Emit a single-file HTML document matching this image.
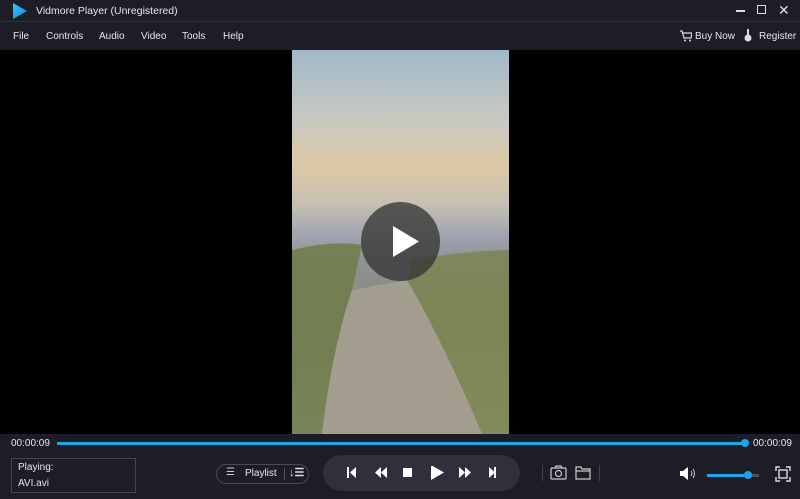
<!DOCTYPE html>
<html><head><style>
*{margin:0;padding:0;box-sizing:border-box}
body{width:800px;height:499px;background:#1d1d28;font-family:"Liberation Sans",sans-serif;color:#e6e6ea;font-size:10px;position:relative;overflow:hidden}
.abs{position:absolute}
</style></head><body>
<div class="abs" style="left:0;top:0;width:800px;height:22px;background:#1d1d28;border-bottom:1px solid #2e2e3a"></div>
<svg class="abs" style="left:12px;top:2px" width="16" height="18"><defs><linearGradient id="g" x1="0" y1="0" x2="1" y2="1"><stop offset="0" stop-color="#2ad0f5"/><stop offset="1" stop-color="#1a7fe0"/></linearGradient></defs><path d="M1 1 L15 9 L1 17 Z" fill="url(#g)"/></svg>
<div class="abs" style="left:36px;top:5px;font-size:10.5px">Vidmore Player (Unregistered)</div>
<div class="abs" style="left:736px;top:10px;width:9px;height:1.5px;background:#ddd"></div>
<div class="abs" style="left:757px;top:5px;width:9px;height:9px;border:1.5px solid #ddd"></div>
<div class="abs" style="left:778px;top:2px;font-size:14px;color:#ddd">✕</div>
<div class="abs" style="left:13px;top:31px">File</div>
<div class="abs" style="left:46px;top:31px">Controls</div>
<div class="abs" style="left:99px;top:31px">Audio</div>
<div class="abs" style="left:141px;top:31px">Video</div>
<div class="abs" style="left:182px;top:31px">Tools</div>
<div class="abs" style="left:223px;top:31px">Help</div>
<svg class="abs" style="left:680px;top:30px" width="12" height="12"><path d="M0 1h2l2 7h7l1-5H3" fill="none" stroke="#ddd" stroke-width="1.2"/><circle cx="5" cy="10.5" r="1" fill="#ddd"/><circle cx="10" cy="10.5" r="1" fill="#ddd"/></svg>
<div class="abs" style="left:695px;top:31px">Buy Now</div>
<svg class="abs" style="left:744px;top:29px" width="8" height="13"><rect x="3" y="0" width="2" height="6" fill="#ddd"/><circle cx="4" cy="9" r="3.5" fill="#ddd"/></svg>
<div class="abs" style="left:759px;top:31px">Register</div>
<div class="abs" style="left:0;top:50px;width:800px;height:384px;background:#000"></div>
<div class="abs" style="left:292px;top:50px;width:217px;height:384px;overflow:hidden;background:linear-gradient(180deg,#9fb8c8 0%,#c8c9c2 18%,#dcc9a6 30%,#c8c0b2 40%,#9fa6b0 48%,#8e9498 54%,#8a8f86 60%,#8d8c7e 72%,#9a968c 85%,#b1aea3 100%)">
<svg width="217" height="384" style="position:absolute;left:0;top:0"><path d="M0 200 Q40 190 70 195 L60 240 Q40 300 30 384 L0 384Z" fill="#6f7c4a" opacity=".85"/><path d="M217 200 Q180 200 120 210 L115 230 Q150 290 190 384 L217 384Z" fill="#7a8550" opacity=".85"/><path d="M60 240 Q40 300 30 384 L190 384 Q150 290 115 230Z" fill="#a39d90"/></svg>
</div>
<div class="abs" style="left:361px;top:202px;width:79px;height:79px;border-radius:50%;background:rgba(50,50,50,.75)"></div>
<svg class="abs" style="left:392px;top:225px" width="28" height="33"><path d="M1 1L27 16.5L1 32Z" fill="#fff"/></svg>
<div class="abs" style="left:11px;top:438px;font-size:10px">00:00:09</div>
<div class="abs" style="left:57px;top:442px;width:688px;height:3px;background:#1ea5e6"></div>
<div class="abs" style="left:741px;top:439px;width:8px;height:8px;border-radius:50%;background:#1ea5e6"></div>
<div class="abs" style="left:753px;top:438px;font-size:10px">00:00:09</div>
<div class="abs" style="left:11px;top:458px;width:125px;height:35px;border:1px solid #45454f"></div>
<div class="abs" style="left:18px;top:462px;font-size:10px">Playing:</div>
<div class="abs" style="left:18px;top:478px;font-size:10px">AVI.avi</div>
<div class="abs" style="left:216px;top:464px;width:93px;height:20px;border:1px solid #4a4a55;border-radius:10px"></div>
<div class="abs" style="left:226px;top:467px;font-size:10px;color:#ccc">☰</div>
<div class="abs" style="left:245px;top:468px;font-size:10px">Playlist</div>
<div class="abs" style="left:284px;top:468px;width:1px;height:12px;background:#555"></div>
<div class="abs" style="left:289px;top:466px;font-size:11px;font-weight:bold;color:#ddd">↓☰</div>
<div class="abs" style="left:323px;top:455px;width:197px;height:36px;border-radius:18px;background:#30303c"></div>
<svg class="abs" style="left:346px;top:466px" width="150" height="14" fill="#fff"><rect x="1" y="1" width="2" height="11"/><path d="M10 1L4 6.5L10 12Z"/><path d="M35 1L29 6.5L35 12ZM41 1L35 6.5L41 12Z"/><rect x="57" y="2" width="9" height="9"/><path d="M85 -1L98 6.5L85 14Z"/><path d="M113 1L119 6.5L113 12ZM119 1L125 6.5L119 12Z"/><path d="M143 1L149 6.5L143 12Z"/><rect x="148" y="1" width="2" height="11"/></svg>
<div class="abs" style="left:542px;top:465px;width:1px;height:16px;background:#444"></div>
<svg class="abs" style="left:550px;top:465px" width="42" height="15" fill="none" stroke="#ccc" stroke-width="1.2"><rect x="1" y="3" width="15" height="11" rx="1"/><circle cx="8.5" cy="8.5" r="3"/><path d="M5 3l1-2h5l1 2"/><path d="M26 2h5l1 2h8v10H26Z"/><path d="M26 6h14"/></svg>
<div class="abs" style="left:599px;top:465px;width:1px;height:16px;background:#444"></div>
<svg class="abs" style="left:679px;top:466px" width="18" height="15"><path d="M1 5h3l5-4v13l-5-4H1Z" fill="#fff"/><path d="M12 5q2 2.5 0 5M14 3q3 4.5 0 9" stroke="#ccc" fill="none"/></svg>
<div class="abs" style="left:707px;top:474px;width:52px;height:3px;background:#555"></div>
<div class="abs" style="left:707px;top:474px;width:41px;height:3px;background:#1ea5e6"></div>
<div class="abs" style="left:744px;top:471px;width:8px;height:8px;border-radius:50%;background:#1ea5e6"></div>
<svg class="abs" style="left:775px;top:466px" width="16" height="16" fill="none" stroke="#ddd" stroke-width="1.4"><path d="M1 5V1h4M11 1h4v4M15 11v4h-4M5 15H1v-4"/><rect x="4" y="4" width="8" height="8"/></svg>
</body></html>
